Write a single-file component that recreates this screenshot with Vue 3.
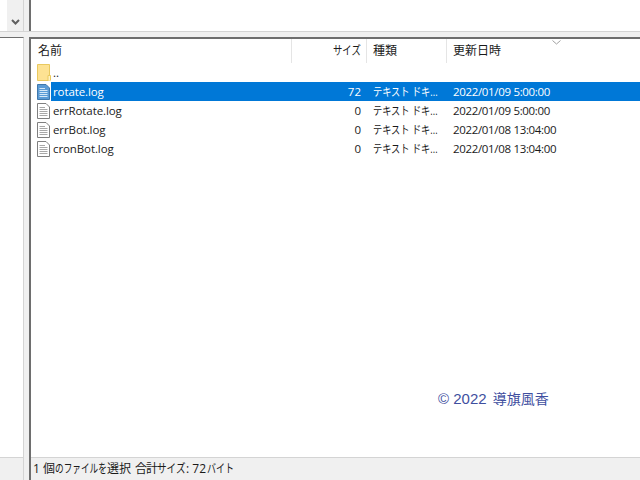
<script setup>
const files = [
  { name: '..', folder: true },
  { name: 'rotate.log', size: '72', type: 'テキスト ドキ...', date: '2022/01/09 5:00:00', selected: true },
  { name: 'errRotate.log', size: '0', type: 'テキスト ドキ...', date: '2022/01/09 5:00:00' },
  { name: 'errBot.log', size: '0', type: 'テキスト ドキ...', date: '2022/01/08 13:04:00' },
  { name: 'cronBot.log', size: '0', type: 'テキスト ドキ...', date: '2022/01/08 13:04:00' }
]
</script>

<template>
  <div class="window">
    <!-- 上の段 -->
    <div class="top-row">
      <div class="left-top">
        <div class="combo-gap"></div>
        <div class="combo-btn">
          <svg width="9" height="6" viewBox="0 0 9 6">
            <path d="M1 1 4.500 4.500 8 1" fill="none" stroke="#606060" stroke-width="2" />
          </svg>
        </div>
      </div>
      <div class="v-split"></div>
      <div class="right-top"></div>
    </div>
    <div class="h-split"></div>

    <!-- メイン -->
    <div class="main-row">
      <div class="left-pane">
        <div class="left-body"></div>
        <div class="left-status"></div>
      </div>
      <div class="v-split"></div>
      <div class="right-pane">
        <div class="list">
          <div class="list-head">
            <div class="col-name head-cell">名前</div>
            <div class="col-size head-cell"><span class="narrow head-kana">サイズ</span></div>
            <div class="col-type head-cell">種類</div>
            <div class="col-date head-cell">更新日時</div>
            <svg class="sort" width="9" height="5" viewBox="0 0 9 5">
              <path d="M0.500 0.500 4.500 4 8.500 0.500" fill="none" stroke="#a0a0a0" />
            </svg>
          </div>
          <div v-for="f in files" :key="f.name" class="file-row" :class="{ selected: f.selected }">
            <div class="icon-cell">
              <svg v-if="f.folder" width="14" height="17" viewBox="0 0 14 17">
                <path d="M0.500 0.500H12.500V16.500H0.500Z" fill="#fde293" stroke="#e9c95f" />
                <path d="M11 16.500V11.500H13.500V16.500" fill="#fff3c4" stroke="#e9c95f" />
              </svg>
              <svg v-else-if="f.selected" width="13" height="16" viewBox="0 0 13 16">
                <path d="M0.500 0.500H9L12.500 4V15.500H0.500Z" fill="#5b9bd5" stroke="#3f78ad" />
                <path d="M2.500 4.500H8M2.500 6.500H10.500M2.500 8.500H10.500M2.500 10.500H10.500M2.500 12.500H10.500" stroke="#d6e8f7" fill="none" />
              </svg>
              <svg v-else width="13" height="16" viewBox="0 0 13 16">
                <path d="M0.500 0.500H9L12.500 4V15.500H0.500Z" fill="#fff" stroke="#7f7f7f" />
                <path d="M2.500 4.500H8M2.500 6.500H10.500M2.500 8.500H10.500M2.500 10.500H10.500M2.500 12.500H10.500" stroke="#a8a8a8" fill="none" />
              </svg>
            </div>
            <div class="row-main">
              <div class="cell-name">{{ f.name }}</div>
              <div class="cell-size">{{ f.size }}</div>
              <div class="cell-type"><span class="narrow type-kana">{{ f.type }}</span></div>
              <div class="cell-date">{{ f.date }}</div>
            </div>
          </div>
          <div class="copyright">© 2022 <span class="cr-name">導旗風香</span></div>
        </div>
        <div class="status">
          <span class="st-num">1</span><span>個</span><span class="narrow st-a">のファイルを</span><span>選択</span><span class="st-sum">合計</span><span class="narrow st-b">サイズ</span><span class="st-num2">: 72</span><span class="narrow st-c">バイト</span>
        </div>
      </div>
    </div>
  </div>
</template>

<style>
html, body {
  margin: 0;
  background: #fff;
}
</style>

<style scoped>
.window {
  width: 640px;
  height: 480px;
  display: flex;
  flex-direction: column;
  overflow: hidden;
  font-family: "Open Sans", "Noto Sans CJK JP", sans-serif;
  font-size: 11.500px;
  color: #1a1a1a;
  background: #fff;
}

.top-row {
  height: 31px;
  display: flex;
}

.left-top {
  width: 24px;
  display: flex;
  border-right: 1px solid #d4d4d4;
  box-sizing: border-box;
}

.combo-gap {
  width: 7px;
}

.combo-btn {
  flex: 1;
  background: #f0f0f0;
  display: flex;
  align-items: flex-end;
  justify-content: center;
  padding-bottom: 6px;
}

.v-split {
  width: 5px;
  background: #f0f0f0;
}

.right-top {
  flex: 1;
  border-left: 2px solid #6e6e6e;
}

.h-split {
  height: 6px;
  background: #f0f0f0;
  border-top: 1px solid #d4d4d4;
  box-sizing: border-box;
}

.main-row {
  flex: 1;
  display: flex;
  min-height: 0;
}

.left-pane {
  width: 24px;
  display: flex;
  flex-direction: column;
  border-right: 1px solid #d4d4d4;
  border-top: 1px solid #6e6e6e;
  box-sizing: border-box;
}

.left-body {
  flex: 1;
}

.left-status {
  height: 23px;
  background: #f0f0f0;
  border-top: 1px solid #d4d4d4;
  box-sizing: border-box;
}

.right-pane {
  flex: 1;
  display: flex;
  flex-direction: column;
  border-left: 2px solid #6e6e6e;
  border-top: 2px solid #6e6e6e;
  min-width: 0;
}

.list {
  flex: 1;
  position: relative;
}

.list-head {
  height: 24px;
  display: flex;
  position: relative;
}

.head-cell {
  box-sizing: border-box;
  border-right: 1px solid #e5e5e5;
  line-height: 23px;
  font-size: 12px;
  color: #1a1a1a;
}

.col-name {
  width: 261px;
  padding-left: 7px;
}

.col-size {
  width: 75px;
  text-align: right;
  padding-right: 5px;
}

.col-type {
  width: 80px;
  padding-left: 6px;
}

.col-date {
  padding-left: 6px;
  border-right: 0;
}

.sort {
  position: absolute;
  left: 521px;
  top: 1px;
}

/* メイリオUIのカナ幅に寄せる */
.narrow {
  display: inline-block;
  white-space: nowrap;
  transform-origin: 0 50%;
}

.head-kana {
  width: 28px;
  transform: scaleX(0.78);
  text-align: left;
}

.type-kana {
  width: 63px;
  transform: scaleX(0.8);
}

.file-row {
  height: 19px;
  display: flex;
  line-height: 19px;
}

.icon-cell {
  width: 15px;
  margin-left: 5px;
  display: flex;
  align-items: center;
  flex: none;
  padding-left: 1px;
  box-sizing: border-box;
}

.row-main {
  flex: 1;
  display: flex;
  min-width: 0;
}

.file-row.selected .row-main {
  background: #0078d7;
  color: #fff;
}

.cell-name {
  width: 241px;
  padding-left: 2px;
  box-sizing: border-box;
  letter-spacing: -0.100px;
}

.cell-size {
  width: 69px;
  text-align: right;
}

.cell-type {
  width: 80px;
  margin-left: 12px;
  white-space: nowrap;
}

.cell-date {
  letter-spacing: -0.330px;
}

.copyright {
  position: absolute;
  left: 407px;
  top: 349px;
  font-size: 15px;
  color: #3f4f9f;
  white-space: nowrap;
  font-family: "Liberation Sans", "Noto Sans CJK JP", sans-serif;
}

.cr-name {
  font-size: 14px;
  margin-left: 2px;
}

.status {
  height: 23px;
  background: #f0f0f0;
  border-top: 1px solid #d4d4d4;
  box-sizing: border-box;
  padding-left: 2px;
  line-height: 22px;
  font-size: 12px;
  color: #1a1a1a;
  white-space: nowrap;
}

.st-num {
  display: inline-block;
  width: 10px;
}

.st-a {
  width: 52px;
  transform: scaleX(0.72);
}

.st-sum {
  margin-left: 4px;
  letter-spacing: -1px;
}

.st-b {
  width: 29px;
  transform: scaleX(0.8);
}

.st-num2 {
  display: inline-block;
  width: 21px;
}

.st-c {
  width: 27px;
  transform: scaleX(0.75);
}
</style>
